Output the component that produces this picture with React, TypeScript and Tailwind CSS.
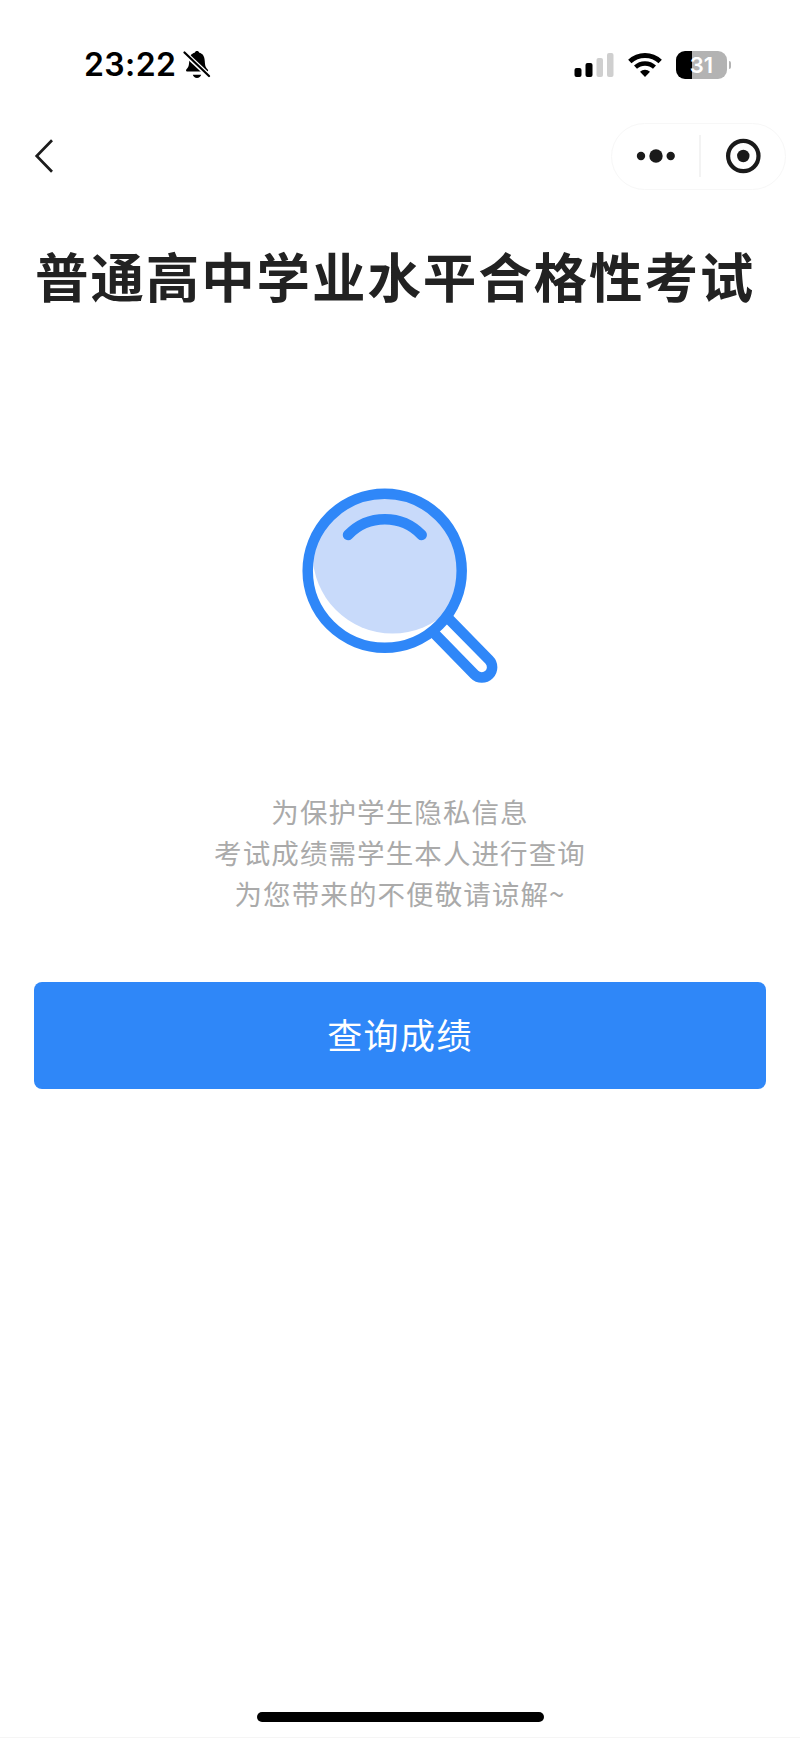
const messages = [
  "为保护学生隐私信息",
  "考试成绩需学生本人进行查询",
  "为您带来的不便敬请谅解~",
];

function StatusBar() {
  return (
    <div className="flex h-[130px] items-start justify-between pt-[45px] pr-[69px] pl-[84px]">
      <div className="flex h-10 items-center gap-[7px]">
        <span className="w-[92px] font-['Inter',sans-serif] text-[32px] leading-10 font-semibold tracking-[0.4px] whitespace-nowrap text-black">
          23:22
        </span>
        {/* Silent mode bell */}
        <svg className="h-[30px] w-[28px]" viewBox="0 0 28 30">
          <path
            d="M4.500 21.500h19.500c1.200 0 1.500-1.300.7-2.100-2-1.800-2.700-3.600-2.900-8C21.600 6 19.500 3.500 16.300 2.800 16 1.600 15 1 14 1s-2 .6-2.300 1.800C8.500 3.500 6.400 6 6.200 11.400c-.2 4.400-.9 6.200-2.900 8-.8.8 0 2.100 1.200 2.100z"
            fill="#000"
          />
          <path d="M9.800 24.800h8.400c-.5 2-2.100 3.200-4.200 3.200s-3.700-1.200-4.200-3.200z" fill="#000" />
          <path d="M1 2.500l25.500 24" stroke="#fff" strokeWidth="5" />
          <path d="M1.500 2.500l24.500 23.500" stroke="#000" strokeWidth="2.200" strokeLinecap="round" />
        </svg>
      </div>

      <div className="flex h-10 items-center">
        {/* Signal */}
        <svg className="h-6 w-10" viewBox="0 0 40 24">
          <rect x="0.500" y="15" width="7" height="9" rx="2" fill="#000" />
          <rect x="11.500" y="10" width="7" height="14" rx="2" fill="#000" />
          <rect x="22.500" y="5" width="6.500" height="19" rx="2" fill="#cfcfcf" />
          <rect x="33" y="0" width="6.500" height="24" rx="2" fill="#cfcfcf" />
        </svg>
        {/* Wi-Fi */}
        <svg className="ml-[14px] h-6 w-[34px]" viewBox="0 0 34 24" fill="none" stroke="#000">
          <path d="M1.800 8.600a22 22 0 0 1 30.400 0" strokeWidth="4.800" />
          <path d="M7.500 14.200a14 14 0 0 1 19 0" strokeWidth="4.400" />
          <path d="M17 24l-5-5.200a7.400 7.400 0 0 1 10 0z" fill="#000" stroke="none" />
        </svg>
        {/* Battery */}
        <div className="ml-[14px] flex h-[28px] w-[51px] items-center justify-center rounded-[9px] bg-linear-to-r from-black from-31% to-[#b3b3b3] to-31%">
          <span className="font-['Inter',sans-serif] text-[22px] leading-none font-semibold text-white">31</span>
        </div>
        <div className="ml-[2px] h-[8px] w-[2px] rounded-r-full bg-[#b3b3b3]" />
      </div>
    </div>
  );
}

function NavBar() {
  return (
    <div className="flex h-[52px] items-center justify-between pr-[14px] pl-[34px]">
      <svg className="h-9 w-5" viewBox="0 0 20 36" fill="none">
        <path d="M18 2.200L2.700 18 18 33.800" stroke="#1c1c1c" strokeWidth="2.700" />
      </svg>
      <div className="flex h-[67px] w-[175px] items-center rounded-full border border-[#f7f7f7]">
        <svg className="ml-[24px] h-4 w-10" viewBox="0 0 40 16" fill="#1a1a1a">
          <circle cx="5" cy="8" r="4.200" />
          <circle cx="20" cy="8" r="6.700" />
          <circle cx="34.700" cy="8" r="4.200" />
        </svg>
        <div className="ml-[23px] h-[42px] w-[2px] bg-[#f3f3f3]" />
        <svg className="ml-[24px] h-9 w-9" viewBox="0 0 36 36">
          <circle cx="18.300" cy="18" r="15.200" fill="none" stroke="#1a1a1a" strokeWidth="4.200" />
          <circle cx="18.300" cy="18" r="6.200" fill="#1a1a1a" />
        </svg>
      </div>
    </div>
  );
}

function Magnifier() {
  return (
    <svg className="h-[220px] w-[220px]" viewBox="0 0 220 220" fill="none">
      <clipPath id="lens">
        <circle cx="94.700" cy="95.700" r="76" />
      </clipPath>
      <circle cx="102.500" cy="78.500" r="80" fill="#c8dafa" clipPath="url(#lens)" />
      <g stroke="#2f87f8" strokeWidth="10.500">
        <circle cx="94.700" cy="95.700" r="77" />
        <path d="M58 60a51 51 0 0 1 73.700 0" strokeLinecap="round" />
        <path d="M143 157l41.500 42.500a10.300 10.300 0 0 0 14.600-14.600L157 142" />
      </g>
    </svg>
  );
}

export default function App() {
  return (
    <div className="flex h-[1738px] w-[800px] flex-col border-b border-[#f5f5f5] bg-white font-['Noto_Sans_CJK_SC',sans-serif]">
      <StatusBar />
      <NavBar />

      <main className="flex flex-col items-center px-[34px] pt-[53px]">
        <h1 className="h-20 w-full pl-[1px] text-[53.500px] leading-20 font-bold tracking-[1.900px] whitespace-nowrap text-[#222]">
          普通高中学业水平合格性考试
        </h1>

        <div className="mt-[160px]">
          <Magnifier />
        </div>

        <div className="mt-[96px] text-center text-[27.500px] leading-[41px] tracking-[1.100px] text-[#aaa]">
          {messages.map((line) => (
            <p key={line}>{line}</p>
          ))}
        </div>

        <button className="mt-[68px] h-[107px] w-full rounded-[8px] bg-[#2f87f8] pb-[2px] text-[35px] tracking-[1.400px] text-white">
          查询成绩
        </button>
      </main>

      {/* Home indicator */}
      <div className="mx-auto mt-auto mb-[15px] h-[10px] w-[287px] rounded-full bg-black" />
    </div>
  );
}
